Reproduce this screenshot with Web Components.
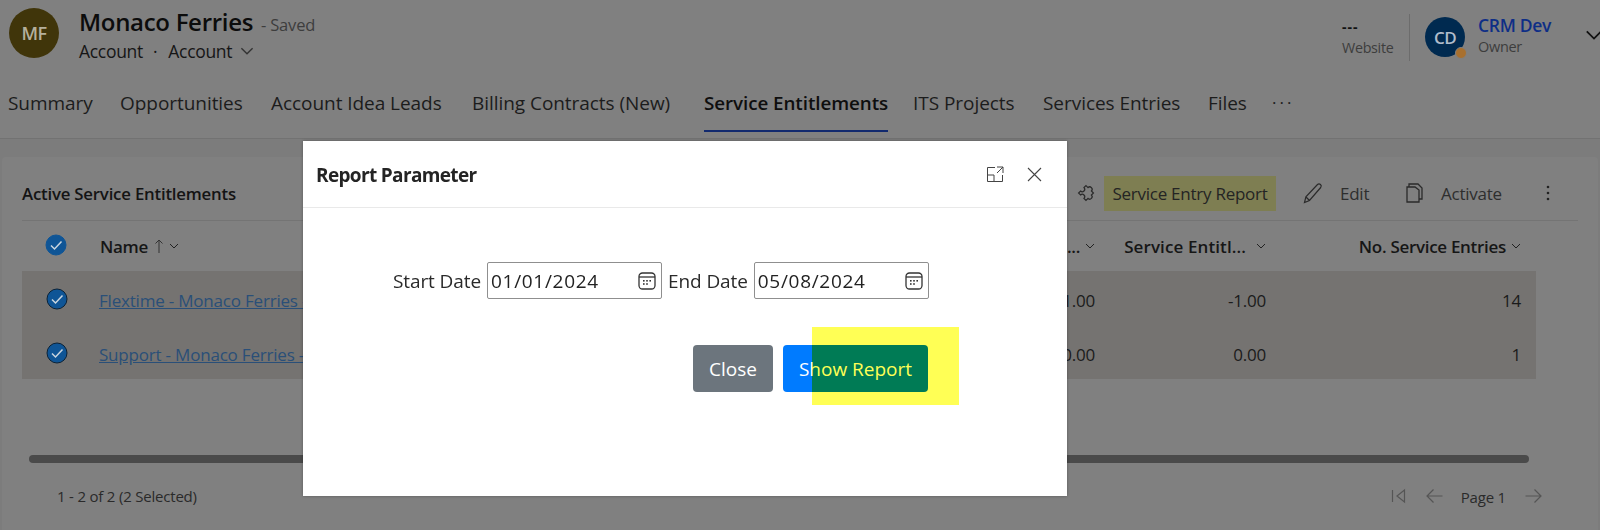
<!DOCTYPE html>
<html><head><meta charset="utf-8"><title>Report Parameter</title>
<style>html,body{margin:0;padding:0;background:#808080}body{font-family:"Open Sans","Noto Sans",sans-serif;color:#141414}</style></head>
<body>
<crm-page>
  <crm-header slot="top"></crm-header>
  <crm-tabs slot="top"></crm-tabs>
  <crm-grid slot="main"></crm-grid>
  <report-dialog slot="over"></report-dialog>
</crm-page>
<script>
const F='"Open Sans","Noto Sans",sans-serif';
function def(name,html){
  class C extends HTMLElement{constructor(){super();this.attachShadow({mode:'open'}).innerHTML=typeof html==='function'?html(this):html;}}
  customElements.define(name,C);
}
const chev=(w=10,s='#222')=>`<svg width="${w}" height="${w}" viewBox="0 0 10 10" fill="none" stroke="${s}" stroke-width="1"><path d="M1 3l4 4 4-4"/></svg>`;
const cal=`<svg width="18" height="18" viewBox="0 0 18 18" fill="none" stroke="#333" stroke-width="1.3"><rect x="1" y="1" width="16" height="16" rx="3.5"/><path d="M1 5h16"/><g fill="#333" stroke="none"><rect x="5" y="8" width="1.6" height="1.6"/><rect x="8.2" y="8" width="1.6" height="1.6"/><rect x="11.4" y="8" width="1.6" height="1.6"/><rect x="5" y="11.2" width="1.6" height="1.6"/><rect x="8.2" y="11.2" width="1.6" height="1.6"/></g></svg>`;

def('crm-page',`<style>:host{display:block;width:1600px;height:530px;position:relative;overflow:hidden;background:#7c7c7c}
.main{display:block;padding:18px 2px 0}</style>
<slot name="top"></slot><div class="main"><slot name="main"></slot></div><slot name="over"></slot>`);

def('crm-header',`<style>:host{display:flex;height:84px;box-sizing:border-box;background:#808080;font-family:${F};padding:8px 0 0 9px}
.av{width:50px;height:50px;border-radius:50%;background:#40350a;color:#b5b09c;display:flex;align-items:center;justify-content:center;font-size:18px;font-weight:600;letter-spacing:-.5px;flex:none}
.id{margin-left:20px;flex:1}
.t{display:flex;align-items:baseline;height:31px;margin-top:-2px}
.n{font-size:24px;font-weight:600;color:#0c0c0c;letter-spacing:-.3px;line-height:31px}
.s{font-size:16.5px;color:#3d3d3d;margin-left:8px;letter-spacing:-.2px}
.sub{display:flex;align-items:center;font-size:17.5px;font-weight:500;color:#161616;height:26px;letter-spacing:-.3px;margin-top:1px}
.sub i{font-style:normal;margin:0 11px 0 10px;font-weight:400}
.sub svg{margin-left:8px}
.r{display:flex;align-items:flex-start;padding-top:6px}
.web{width:67px;font-size:14.3px;color:#3d3d3d;letter-spacing:-.3px;padding-top:3px}
.web b{display:block;font-size:14px;line-height:20px;color:#111;font-weight:700;letter-spacing:1px}
.web span{display:block;line-height:22px}
.dv{width:1px;height:47px;background:#6c6c6c;margin-right:15px}
.cd{width:40px;height:40px;border-radius:50%;background:#002a50;color:#b0bccb;position:relative;display:flex;align-items:center;justify-content:center;font-size:17px;font-weight:600;letter-spacing:-.5px;margin-top:3px}
.cd::after{content:"";position:absolute;right:-2px;bottom:-2px;width:10px;height:10px;border-radius:50%;background:#a8702f;border:1.5px solid #808080}
.who{margin-left:13px;width:107px;letter-spacing:-.3px}
.who b{display:block;font-size:17.5px;line-height:22px;font-weight:600;color:#0e2e86}
.who span{display:block;font-size:14.5px;line-height:22px;color:#3d3d3d}
.ch{margin:12px 0 0 0;width:15px;overflow:hidden}
</style>
<div class="av">MF</div>
<div class="id"><div class="t"><span class="n">Monaco Ferries</span><span class="s">- Saved</span></div>
<div class="sub"><span>Account</span><i>·</i><span>Account</span>${chev(14,'#333')}</div></div>
<div class="r"><div class="web"><b>---</b><span>Website</span></div><div class="dv"></div><div class="cd">CD</div>
<div class="who"><b>CRM Dev</b><span>Owner</span></div><div class="ch">${chev(18,'#111')}</div></div>`);

def('crm-tabs',`<style>:host{display:grid;grid-template-columns:112px 151px 201px 232px 209px 130px 165px 64px 40px;height:55px;box-sizing:border-box;padding-left:8px;background:#808080;border-bottom:1px solid #727272;font-family:${F};font-size:19px;letter-spacing:-.05px;color:#1c1c1c}
div{height:47px;line-height:38px;white-space:nowrap}
.a{font-weight:600;font-size:18.8px;color:#0e0e0e;width:184px;border-bottom:2px solid #11296e;height:46px;letter-spacing:-.06px}
.m{letter-spacing:3px;font-size:17px}
</style>
<div>Summary</div><div>Opportunities</div><div>Account Idea Leads</div><div>Billing Contracts (New)</div><div class="a">Service Entitlements</div><div>ITS Projects</div><div>Services Entries</div><div>Files</div><div class="m">···</div>`);

const tick=(r)=>`<svg width="22" height="22" viewBox="0 0 22 22"><circle cx="11" cy="11" r="10" fill="#0f5596" stroke="${r?'#0a2238':'#0f5596'}" stroke-width="1"/><path d="M6 11.5l3.5 3.500 7-7.500" fill="none" stroke="#c9d5df" stroke-width="1.5"/></svg>`;

def('grid-toolbar',`<style>:host{display:flex;align-items:center;height:64px;box-sizing:border-box;margin-left:20px;margin-right:20px;border-bottom:1px solid #747474;font-family:${F};font-size:17px;color:#2e2e2e;letter-spacing:-.25px}
.t{font-weight:600;font-size:16.8px;color:#141414;flex:1;letter-spacing:-.2px;padding-top:9px}
.b{display:flex;align-items:center;height:35px;margin-top:9px;white-space:nowrap}
.hl{background:#7e7e52;width:172px;justify-content:center;box-sizing:border-box;margin-right:27px;color:#242424}
svg{flex:none}
.e{width:103px}.e svg{margin-right:17px}
.act{width:134px}.act svg{margin-right:18px}
.k{margin-right:22px;margin-top:9px;width:16px;height:16px}
.p{margin-right:9px;margin-top:9px}
</style>
<div class="t">Active Service Entitlements</div>
<svg class="p" width="18" height="18" viewBox="3 3 12 12" fill="none" stroke="#2a2a2a" stroke-width=".8"><g transform="rotate(45 9 9)"><path d="M5.500 5.500h1.900a1.600 1.600 0 0 1 3.200 0h1.900v1.900a1.600 1.600 0 0 1 0 3.200v1.900h-1.900a1.600 1.600 0 0 0-3.200 0H5.500v-1.900a1.600 1.600 0 0 0 0-3.200z"/></g></svg>
<div class="b hl">Service Entry Report</div>
<div class="b e"><svg width="20" height="22" viewBox="0 0 20 22" fill="none" stroke="#2a2a2a" stroke-width="1.2"><path d="M1.5 20.5l1.4-5.600L14.500 2.500a2.200 2.200 0 0 1 3.200 3L6.500 18.500zM3 15l3.500 3.500"/></svg><span>Edit</span></div>
<div class="b act"><svg width="17" height="20" viewBox="0 0 17 20" fill="none" stroke="#2a2a2a" stroke-width="1.3"><path d="M3 4V1h9l4 4v11h-3"/><path d="M1 4h8l4 3v12H1z" fill="#808080"/></svg><span>Activate</span></div>
<svg class="k" viewBox="0 0 16 16" fill="#222"><circle cx="8" cy="2" r="1.3"/><circle cx="8" cy="8" r="1.3"/><circle cx="8" cy="14" r="1.3"/></svg>`);

const COLS='grid-template-columns:78px 925px 70px 171px 255px 15px';
def('grid-head',`<style>:host{display:grid;${COLS};height:50px;align-items:center;margin-left:20px;width:1514px;font-family:${F};font-size:17px;font-weight:600;color:#161616;letter-spacing:-.3px}
.c{padding-left:23px;padding-bottom:2px;display:flex}
.nm{display:flex;align-items:center;gap:5px}
.r{display:flex;justify-content:flex-end;align-items:center;gap:5px;white-space:nowrap}
svg.ar{margin-left:1px}
.g{gap:10px;letter-spacing:.1px}
</style>
<div class="c">${tick(0)}</div>
<div class="nm"><span>Name</span><svg class="ar" width="10" height="16" viewBox="0 0 10 16" fill="none" stroke="#333" stroke-width="1"><path d="M5 15V2M1.5 5.5L5 2l3.500 3.500"/></svg>${chev(10)}</div>
<div class="r"><span>...</span>${chev(10)}</div>
<div class="r g"><span>Service Entitl...</span>${chev(10)}</div>
<div class="r"><span>No. Service Entries</span>${chev(10)}</div><div></div>`);

def('grid-row',h=>`<style>:host{display:grid;${COLS};height:54px;align-items:center;margin-left:20px;width:1514px;background:#757371;font-family:${F};font-size:17px;color:#1b1b1b;letter-spacing:-.2px}
div{padding-top:5px}
.c{padding:2px 0 0 24px;display:flex}
a{color:#2a4f78;text-decoration:underline;white-space:nowrap;margin-left:-1px}
.n{text-align:right;font-size:17px}
</style>
<div class="c">${tick(1)}</div><div><a>${h.getAttribute('name')}</a></div>
<div class="n">${h.getAttribute('a')}</div><div class="n">${h.getAttribute('b')}</div><div class="n">${h.getAttribute('c')}</div><div></div>`);

def('grid-footer',`<style>:host{display:block;font-family:${F};font-size:15px;color:#2a2a2a;letter-spacing:-.2px}
.sb{height:8px;border-radius:4px;background:#4a4a4a;width:1500px;margin:76px 0 0 27px}
.f{display:flex;align-items:center;height:40px;margin-top:13px;padding-left:55px}
.l{flex:1}
.p{display:flex;align-items:center;margin-right:56px}
.pg{margin:0 19px 0 18px;padding-top:2px}
</style><div class="sb"></div>
<div class="f"><span class="l">1 - 2 of 2 (2 Selected)</span><div class="p">
<svg width="15" height="16" viewBox="0 0 15 16" fill="none" stroke="#555" stroke-width="1.2" style="margin-right:20px"><path d="M1.5 2v12M13.500 2L6 8l7.500 6z"/></svg>
<svg width="17" height="16" viewBox="0 0 17 16" fill="none" stroke="#555" stroke-width="1.2"><path d="M16.500 8H1M7.500 1.500L1 8l6.500 6.500"/></svg>
<span class="pg">Page 1</span>
<svg width="17" height="16" viewBox="0 0 17 16" fill="none" stroke="#555" stroke-width="1.2"><path d="M.5 8H16M9.500 1.500L16 8l-6.500 6.500"/></svg></div></div>`);

def('crm-grid',`<style>:host{display:block;height:373px;background:#808080;border-radius:4px 4px 0 0}</style>
<grid-toolbar></grid-toolbar><grid-head></grid-head>
<grid-row name="Flextime - Monaco Ferries -" a="1.00" b="-1.00" c="14"></grid-row>
<grid-row name="Support - Monaco Ferries -" a="0.00" b="0.00" c="1"></grid-row>
<grid-footer></grid-footer>`);

def('date-field',h=>`<style>:host{display:flex;align-items:center;justify-content:space-between;box-sizing:border-box;width:175px;height:37px;border:1px solid #8f8f8f;border-radius:2px;padding:0 5px 0 3px;font-size:19px;color:#222;letter-spacing:.7px;background:#fff;flex:none}
svg{display:block}</style><span>${h.getAttribute('value')}</span>${cal}`);

def('report-dialog',`<style>:host{position:absolute;left:303px;top:141px;width:764px;height:355px;background:#fff;z-index:5;font-family:${F};color:#222;display:flex;flex-direction:column;box-shadow:0 0 3px rgba(0,0,0,.3)}
.h{display:flex;align-items:center;height:66px;border-bottom:1px solid #e9e9e9;padding-left:13px;flex:none}
.h b{flex:1;font-size:19px;font-weight:700;letter-spacing:-.65px;color:#242424;padding-top:2px}
.h svg{display:block}
.form{display:flex;align-items:center;margin:54px 0 0 90px;font-size:19px;gap:6px;letter-spacing:-.1px;color:#2a2a2a}
.btns{display:flex;gap:10px;margin:46px 0 0 390px}
.bt{height:47px;display:flex;align-items:center;justify-content:center;border-radius:4px;color:#fff;font-size:19px;box-sizing:border-box}
.c{width:80px;background:#6c757d}
.s{width:145px;background:#007bff}
.hl{position:absolute;left:509px;top:186px;width:147px;height:78px;background:#ffff55;mix-blend-mode:multiply}
</style>
<div class="h"><b>Report Parameter</b>
<svg style="margin-right:23px" width="17" height="16" viewBox="0 0 17 16" fill="none" stroke="#444" stroke-width="1"><path d="M8 1.500H.5V15.500H15.500V9M.5 9H7V15.500M10 1H16V7M16 1L10 7"/></svg>
<svg style="margin-right:25px" width="15" height="15" viewBox="0 0 15 15" fill="none" stroke="#444" stroke-width="1.1"><path d="M1 1l13 13M14 1L1 14"/></svg></div>
<div class="form"><span>Start Date</span><date-field value="01/01/2024"></date-field><span>End Date</span><date-field value="05/08/2024"></date-field></div>
<div class="btns"><div class="bt c">Close</div><div class="bt s">Show Report</div></div>
<div class="hl"></div>`);
</script>
</body></html>
